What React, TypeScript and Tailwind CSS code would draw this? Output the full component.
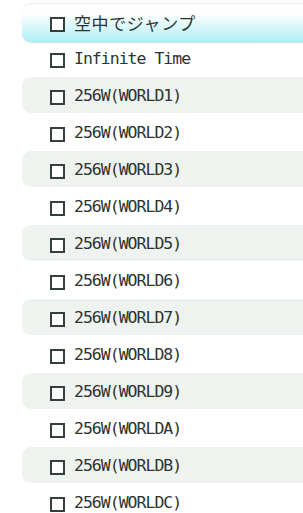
const items = [
  "空中でジャンプ",
  "Infinite Time",
  "256W(WORLD1)",
  "256W(WORLD2)",
  "256W(WORLD3)",
  "256W(WORLD4)",
  "256W(WORLD5)",
  "256W(WORLD6)",
  "256W(WORLD7)",
  "256W(WORLD8)",
  "256W(WORLD9)",
  "256W(WORLDA)",
  "256W(WORLDB)",
  "256W(WORLDC)",
];

function Row({ label, index }: { label: string; index: number }) {
  const selected = index === 0;
  const striped = index % 2 === 0 && !selected;

  return (
    <div className="relative h-[36px]">
      {selected && (
        <div className="absolute left-[22px] right-0 top-0 h-[39px] rounded-l-[9px] border-t border-[#e4ece6] bg-gradient-to-b from-white from-25% to-[#acedf6] shadow-[0_1px_1px_rgba(180,200,190,0.6)]" />
      )}
      {striped && (
        <div className="absolute left-[22px] right-0 top-0 h-[36px] rounded-l-[9px] bg-[#eff3f0]" />
      )}
      <div className={`relative flex items-center gap-[9px] pl-[50px] ${selected ? "h-[40px]" : "h-[38px]"}`}>
        <div className="mt-[2px] h-[15px] w-[15px] shrink-0 border-2 border-[#34403c] bg-white" />
        <span
          className={
            selected
              ? "text-[17px] tracking-[0.6px] text-[#2c3330]"
              : "text-[16.5px] tracking-[-1px] text-[#2c3330]"
          }
          style={{ fontFamily: selected ? '"Noto Sans CJK JP", sans-serif' : '"DejaVu Sans Mono", monospace' }}
        >
          {label}
        </span>
      </div>
    </div>
  );
}

export default function App() {
  return (
    <div className="h-[513px] w-[303px] overflow-hidden bg-white pt-[3px]">
      <div className="flex flex-col gap-[1px]">
        {items.map((label, i) => (
          <Row key={label} label={label} index={i} />
        ))}
      </div>
    </div>
  );
}
